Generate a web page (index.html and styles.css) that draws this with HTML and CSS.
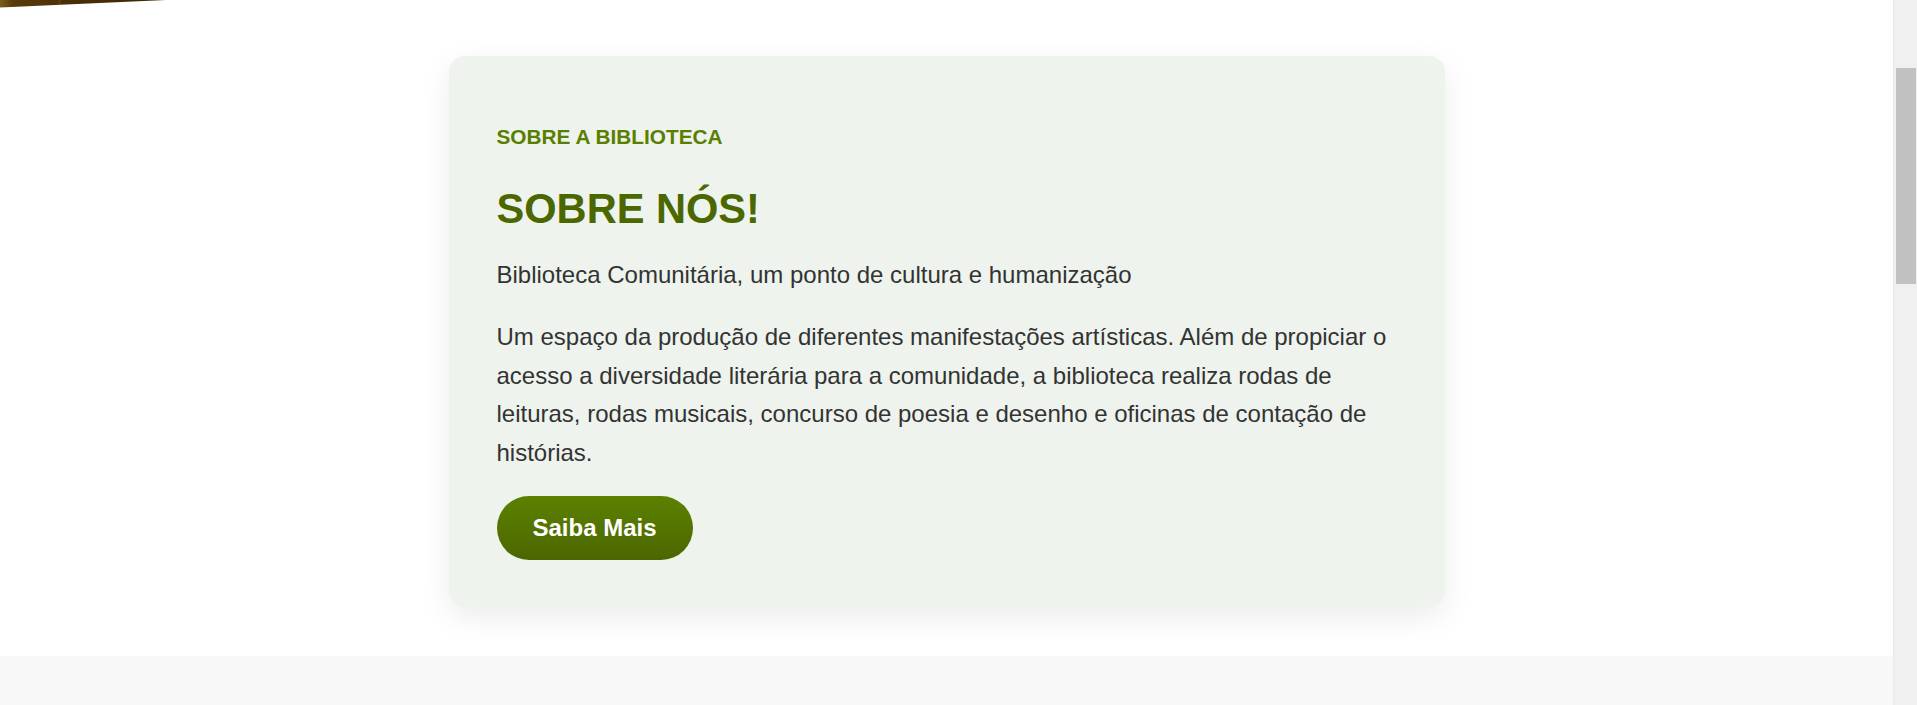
FILE: index.html
```html
<!DOCTYPE html>
<html lang="pt-BR">
<head>
<meta charset="utf-8">
<title>Sobre Nós</title>
<link rel="stylesheet" href="styles.css">
</head>
<body>
<div class="window">
  <div class="page">
    <div class="hero-edge">
      <svg width="170" height="9" viewBox="0 0 170 9" aria-hidden="true">
        <defs>
          <linearGradient id="wood" x1="0" y1="0" x2="1" y2="0">
            <stop offset="0" stop-color="#7b5c1c"/>
            <stop offset="0.08" stop-color="#5a3a08"/>
            <stop offset="0.35" stop-color="#4e3106"/>
            <stop offset="0.36" stop-color="#5e4010"/>
            <stop offset="0.37" stop-color="#4b2f05"/>
            <stop offset="1" stop-color="#3e2704"/>
          </linearGradient>
        </defs>
        <polygon points="0,0 166,0 0,7.5" fill="url(#wood)"/>
      </svg>
    </div>
    <section class="about">
      <div class="card">
        <p class="eyebrow">SOBRE A BIBLIOTECA</p>
        <h2 class="title">SOBRE NÓS!</h2>
        <p class="text">Biblioteca Comunitária, um ponto de cultura e humanização</p>
        <p class="text">Um espaço da produção de diferentes manifestações artísticas. Além de propiciar o acesso a diversidade literária para a comunidade, a biblioteca realiza rodas de leituras, rodas musicais, concurso de poesia e desenho e oficinas de contação de histórias.</p>
        <a class="btn" href="#">Saiba Mais</a>
      </div>
    </section>
    <section class="next"></section>
  </div>
  <div class="scrollbar"><div class="thumb"></div></div>
</div>
</body>
</html>
```

FILE: styles.css
```css
html, body {
  margin: 0;
  padding: 0;
  height: 705px;
  overflow: hidden;
  background: #ffffff;
}

body {
  font-family: "Liberation Sans", Arial, sans-serif;
  color: #333333;
}

.window {
  display: flex;
  height: 705px;
}

.page {
  flex: 1;
  display: flex;
  flex-direction: column;
  min-width: 0;
}

.hero-edge {
  height: 9px;
  line-height: 0;
}

.about {
  display: flex;
  justify-content: center;
  padding: 47px 0 49px;
}

.card {
  width: 996px;
  box-sizing: border-box;
  padding: 68px 48px 47px;
  background: #eef3ed;
  border-radius: 16px;
  box-shadow: 0 10px 30px rgba(0, 0, 0, 0.08);
}

.eyebrow {
  margin: 0;
  font-size: 20.8px;
  line-height: 25px;
  font-weight: 700;
  color: #5a7f00;
}

.title {
  margin: 35px 0 22px;
  font-size: 41.6px;
  line-height: 50px;
  font-weight: 700;
  color: #4b6800;
}

.text {
  margin: 0 0 24px;
  font-size: 24px;
  line-height: 38.4px;
  color: #333333;
}

.btn {
  display: inline-block;
  padding: 0 36px;
  height: 64px;
  line-height: 64px;
  border-radius: 32px;
  background: linear-gradient(180deg, #5b8100 0%, #4c6600 100%);
  color: #ffffff;
  font-size: 24px;
  font-weight: 700;
  text-decoration: none;
}

.next {
  flex: 1;
  background: #f8f8f8;
}

.scrollbar {
  width: 24px;
  flex: none;
  background: #f0f0f0;
  border-left: 1px solid #e9e9e9;
  box-sizing: border-box;
  padding: 68px 1px 0 2px;
}

.thumb {
  height: 216px;
  background: #c1c1c1;
}
```
